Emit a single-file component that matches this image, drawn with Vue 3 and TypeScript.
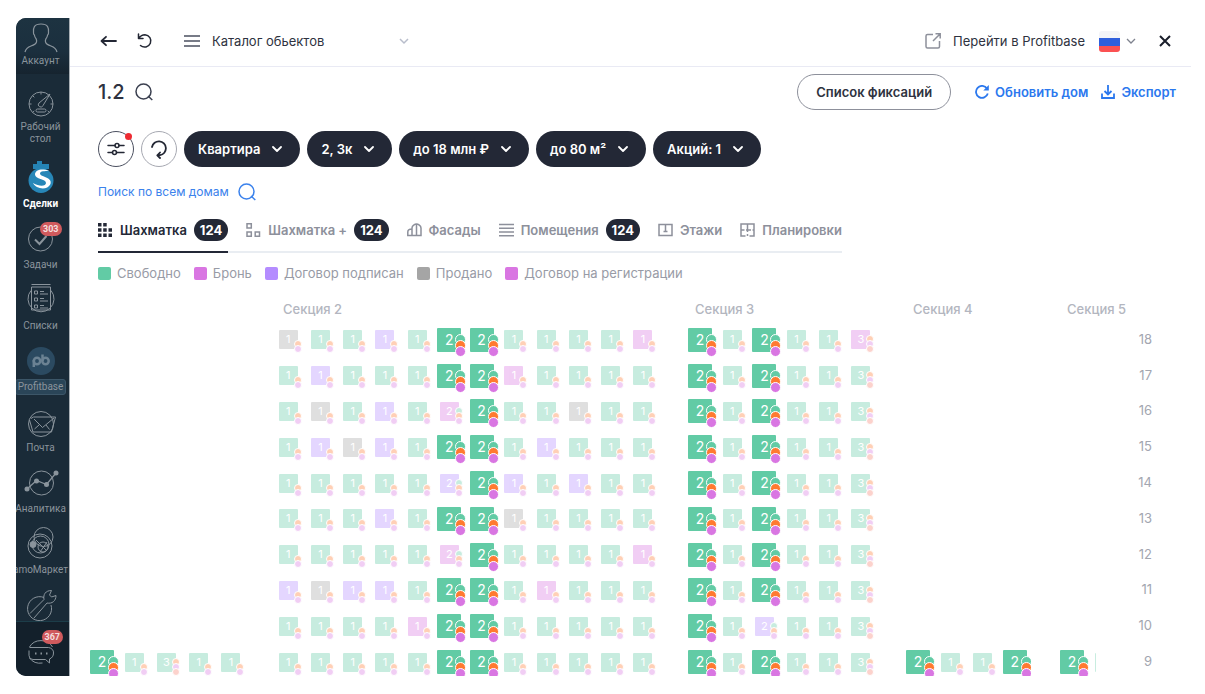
<script setup lang="ts">
interface Tab {
  icon: string
  label: string
  count?: number
}

interface Section {
  name: string
  columns: number
  floors: Record<number, string>
}

interface Cell {
  rooms: string
  status: string
  active: boolean
  dots: string[]
}

const filters = ['Квартира', '2, 3к', 'до 18 млн ₽', 'до 80 м²', 'Акций: 1']

const tabs: Tab[] = [
  { icon: 'chess', label: 'Шахматка', count: 124 },
  { icon: 'chessPlus', label: 'Шахматка +', count: 124 },
  { icon: 'facade', label: 'Фасады' },
  { icon: 'rows', label: 'Помещения', count: 124 },
  { icon: 'floor', label: 'Этажи' },
  { icon: 'plan', label: 'Планировки' },
]

const legend = [
  { status: 'free', label: 'Свободно' },
  { status: 'booked', label: 'Бронь' },
  { status: 'signed', label: 'Договор подписан' },
  { status: 'sold', label: 'Продано' },
  { status: 'booked', label: 'Договор на регистрации' },
]

const floorNumbers = [18, 17, 16, 15, 14, 13, 12, 11, 10, 9]

// One token per flat: status letter + room count; "A2" is a flat that passes the filters.
const sections: Section[] = [
  { name: '', columns: 5, floors: { 9: 'A2 f1 f3 f1 f1' } },
  {
    name: 'Секция 2',
    columns: 12,
    floors: {
      18: 'x1 f1 f1 s1 f1 A2 A2 f1 f1 f1 f1 b1',
      17: 'f1 s1 f1 f1 f1 A2 A2 b1 f1 f1 f1 f1',
      16: 'f1 x1 f1 s1 f1 b2 A2 f1 f1 x1 f1 f1',
      15: 'f1 s1 x1 s1 f1 A2 A2 f1 s1 f1 f1 f1',
      14: 'f1 f1 f1 f1 f1 s2 A2 s1 f1 s1 f1 f1',
      13: 'f1 f1 f1 s1 f1 A2 A2 x1 f1 f1 f1 f1',
      12: 'f1 f1 f1 f1 f1 b2 A2 f1 f1 f1 f1 b1',
      11: 's1 x1 s1 s1 f1 A2 A2 f1 b1 f1 f1 f1',
      10: 'f1 f1 f1 f1 b1 A2 A2 f1 f1 f1 f1 f1',
      9: 'f1 f1 f1 f1 f1 A2 A2 f1 f1 f1 f1 f1',
    },
  },
  {
    name: 'Секция 3',
    columns: 6,
    floors: {
      18: 'A2 f1 A2 f1 f1 b3',
      17: 'A2 f1 A2 f1 f1 f3',
      16: 'A2 f1 A2 f1 f1 f3',
      15: 'A2 f1 A2 f1 f1 f3',
      14: 'A2 f1 A2 f1 f1 f3',
      13: 'A2 f1 A2 f1 f1 f3',
      12: 'A2 f1 A2 f1 f1 f3',
      11: 'A2 f1 A2 f1 f1 f3',
      10: 'A2 f1 s2 f1 f1 f3',
      9: 'A2 f1 A2 f1 f1 f3',
    },
  },
  { name: 'Секция 4', columns: 4, floors: { 9: 'A2 f1 f1 A2' } },
  { name: 'Секция 5', columns: 4, floors: { 9: 'A2 f1 f1 f1' } },
]

const statusNames: Record<string, string> = { A: 'free', f: 'free', s: 'signed', b: 'booked', x: 'sold' }
const dotSets: Record<string, string[]> = {
  1: ['orange', 'pink'],
  2: ['green', 'orange', 'pink'],
  3: ['orange', 'pink', 'red'],
}

function cellsOf(section: Section, floor: number): Cell[] {
  const row = section.floors[floor]
  if (!row) return []
  return row.split(' ').map((token) => ({
    rooms: token[1],
    status: statusNames[token[0]],
    active: token[0] === 'A',
    dots: dotSets[token[1]],
  }))
}

function sectionWidth(section: Section): string {
  return `${Math.floor(section.columns * 32.3)}px`
}
</script>

<template>
  <div class="app">
    <aside class="sidebar">
      <a class="account" href="#">
        <svg class="account-icon" viewBox="0 0 36 30" fill="none" stroke="currentColor" stroke-width="1.200">
          <path d="M2 29c1-4 3-5 6-6 3-1 5-2 5.500-4 .3-1 .1-2-.3-3-1-1-1.600-2.500-1.800-4-.8-.5-1-1.500-.9-2.500C10 5 11 1 18 1s8 4 7.500 8.500c.1 1-.1 2-.9 2.500-.2 1.500-.8 3-1.800 4-.4 1-.6 2-.3 3 .5 2 2.500 3 5.500 4 3 1 5 2 6 6" />
        </svg>
        <span>Аккаунт</span>
      </a>
      <nav class="nav">
        <a class="item" href="#">
          <svg viewBox="0 0 40 34" fill="none" stroke="currentColor">
            <circle cx="20" cy="21" r="12" />
            <path d="M29 11 22 22.500a2.400 2.400 0 1 1-4-2.500zM16.500 26h7a1.500 1.500 0 0 1 0 3h-7a1.500 1.500 0 0 1 0-3zM20 9v2.500M11.500 12.500l1.800 1.800M8 21h2.500M32 21h-2.500M11.500 29.500l1.800-1.600M28.500 29.500l-1.800-1.600" />
          </svg>
          <span>Рабочий<br />стол</span>
        </a>
        <a class="item current" href="#">
          <svg viewBox="0 0 40 34">
            <path d="M16 1h5v3h7v5H12V4h4z" fill="#2584b5" />
            <circle cx="20" cy="20.500" r="12.500" fill="#2787b8" />
            <path d="M28 11c-7-3-14-1-14 3.500 0 5 11 4 11 8.500 0 3-6 4-13 0 3 6 14 8 17.500 1 2.500-7-10.500-7-10.500-10.500 0-2.500 5-2.500 9-2.500z" fill="#fff" />
          </svg>
          <span>Сделки</span>
        </a>
        <a class="item" href="#">
          <svg viewBox="0 0 40 34" fill="none" stroke="currentColor">
            <circle cx="19.500" cy="18" r="12" />
            <path d="m14 18.500 4.500 4.500 7-8" stroke-width="2" />
          </svg>
          <b class="badge">303</b>
          <span>Задачи</span>
        </a>
        <a class="item" href="#">
          <svg viewBox="0 0 40 34" fill="none" stroke="currentColor">
            <path d="M10 8.500a13 13 0 1 0 20 0M10.500 2.500h19M10.500 5h19v23h-19z" />
            <path d="M13.500 9h3v3h-3zM13.500 16h3v3h-3zM13.500 23h3v3h-3zM19 9.500h4M19 12h8M19 16.500h4M19 19h8M19 23.500h4M19 26h8" />
          </svg>
          <span>Списки</span>
        </a>
        <a class="item" href="#">
          <svg viewBox="0 0 40 34">
            <circle cx="20" cy="18" r="14" fill="#2b4a61" />
            <g fill="none" stroke="#6b8293" stroke-width="2.500">
              <circle cx="16" cy="18" r="3.200" />
              <path d="M12.800 17v7M21.500 11.500V18" />
              <circle cx="24.500" cy="18" r="3.200" />
            </g>
          </svg>
          <span class="boxed">Profitbase</span>
        </a>
        <a class="item" href="#">
          <svg viewBox="0 0 40 34" fill="none" stroke="currentColor">
            <circle cx="20" cy="20" r="12.500" />
            <path d="M10 14.500 12.500 13h22l-4 15H12L8.500 16M13 15l8.500 8.500L33 14M13.500 25l4.500-4M28.500 25.500 25 21" />
          </svg>
          <span>Почта</span>
        </a>
        <a class="item" href="#">
          <svg viewBox="0 0 40 34" fill="none" stroke="currentColor">
            <circle cx="20.500" cy="18" r="12" />
            <path d="m6 24 9.500-8.500 10 4L35 8" stroke-width="1.300" />
            <g fill="currentColor" stroke="none">
              <circle cx="6" cy="24" r="2.500" /><circle cx="15.500" cy="16" r="2.500" />
              <circle cx="25.500" cy="19.500" r="2.500" /><circle cx="35" cy="8" r="2.500" />
            </g>
          </svg>
          <span>Аналитика</span>
        </a>
        <a class="item" href="#">
          <svg viewBox="0 0 40 34" fill="none" stroke="currentColor">
            <circle cx="19" cy="20" r="12" /><circle cx="22.500" cy="11" r="9.500" />
            <circle cx="19.500" cy="18.500" r="8.500" /><circle cx="22" cy="21" r="5" />
            <path d="m15 14 11 11M26 16l-7 10" />
            <circle cx="12" cy="18.500" r="3" fill="currentColor" />
          </svg>
          <span>amoМаркет</span>
        </a>
        <a class="item" href="#" aria-label="Настройки">
          <svg viewBox="0 0 40 34" fill="none" stroke="currentColor">
            <path d="M23 10.500A12 12 0 1 0 30 18M9 26.500 23 12.500c-1-5 1.500-9 7.500-9l-2 4.500 2 2 4.500-1.500c0 5.500-4 8.500-9 7.500L13 31" />
          </svg>
        </a>
      </nav>
      <a class="chat" href="#" aria-label="Чаты">
        <svg viewBox="0 0 40 34" fill="none" stroke="currentColor">
          <path d="M8.500 13a13 12 0 0 1 23 0M8.500 24a13 12 0 0 0 13 5M8.500 13.500h19a6 5 0 0 1 5 5.500c0 3-1.500 5-4 6v4l-4-3.500H12a4 4 0 0 1-4-4v-5" />
          <path d="M14 19.500h1.500M19.500 19.500H21M25 19.500h1.500" stroke-width="2" />
        </svg>
        <b class="badge">367</b>
      </a>
    </aside>

    <main class="main">
      <header class="topbar">
        <button class="icon-button back" aria-label="Назад">
          <svg width="18" height="16" viewBox="0 0 18 16" fill="none" stroke="#232734" stroke-width="1.800" stroke-linecap="round" stroke-linejoin="round"><path d="M1.500 8h14.500M6 3.800 1.500 8 6 12.200" /></svg>
        </button>
        <button class="icon-button undo" aria-label="Обновить">
          <svg width="16" height="16" viewBox="0 0 16 16" fill="none" stroke="#232734" stroke-width="1.500" stroke-linecap="round" stroke-linejoin="round"><path d="M1.500 1v4.500H6M1.800 5.200C3.300 3 5.500 1.700 8 1.700a6.200 6.200 0 1 1-4.500 10.800" /></svg>
        </button>
        <button class="catalog">
          <svg width="16" height="14" viewBox="0 0 16 14" fill="none" stroke="#4b5060" stroke-width="1.500"><path d="M0 2h16M0 7h16M0 12h16" /></svg>
          <span>Каталог обьектов</span>
          <svg class="catalog-arrow" width="10" height="8" viewBox="0 0 10 8" fill="none" stroke="#b8bdcb" stroke-width="1.500"><path d="m1 2 4 4 4-4" /></svg>
        </button>
        <a class="external" href="#">
          <svg width="16" height="16" viewBox="0 0 16 16" fill="none" stroke="#8d909b" stroke-width="1.500"><path d="M8 1.500H2.500a1.500 1.500 0 0 0-1.500 1.500v10.500A1.500 1.500 0 0 0 2.500 15H13a1.500 1.500 0 0 0 1.500-1.500V8M10.500.800h4.700v4.700M15 1 8 8" /></svg>
          <span>Перейти в Profitbase</span>
        </a>
        <button class="language" aria-label="Русский">
          <span class="flag"></span>
          <svg width="10" height="8" viewBox="0 0 10 8" fill="none" stroke="#7e828e" stroke-width="1.300"><path d="m1 2 4 4 4-4" /></svg>
        </button>
        <button class="icon-button" aria-label="Закрыть">
          <svg width="12" height="12" viewBox="0 0 12 12" fill="none" stroke="#1a1e2b" stroke-width="2"><path d="m1 1 10 10M11 1 1 11" /></svg>
        </button>
      </header>

      <div class="titlebar">
        <h1>1.2</h1>
        <button class="icon-button title-search" aria-label="Поиск">
          <svg width="18" height="18" viewBox="0 0 18 18" fill="none" stroke="#3b4050" stroke-width="1.500"><circle cx="8.500" cy="8.500" r="7.500" /><path d="m13 13 4.300 4" /></svg>
        </button>
        <button class="fixations">Список фиксаций</button>
        <a class="action" href="#">
          <svg width="14" height="14" viewBox="0 0 14 14" fill="none" stroke="currentColor" stroke-width="1.800"><path d="M12 3.500A6 6 0 1 0 12.800 8.500" /><path d="M13.800 0v5.500H8.300z" fill="currentColor" stroke="none" /></svg>
          Обновить дом
        </a>
        <a class="action" href="#">
          <svg width="14" height="14" viewBox="0 0 14 14" fill="none" stroke="currentColor" stroke-width="1.800"><path d="M7 0v9M3.500 6 7 9.500 10.500 6M1 8.500V13h12V8.500" /></svg>
          Экспорт
        </a>
      </div>

      <div class="filters">
        <button class="round marked" aria-label="Фильтры">
          <svg width="18" height="14" viewBox="0 0 18 14" fill="none" stroke="#232734" stroke-width="1.500" stroke-linecap="round"><path d="M1 3.500h7M12 3.500h5M1 10.500h4.500M9.500 10.500H17" /><circle cx="10" cy="3.500" r="2" /><circle cx="7.500" cy="10.500" r="2" /></svg>
        </button>
        <button class="round" aria-label="Сбросить">
          <svg width="18" height="20" viewBox="0 0 18 20" fill="none" stroke="#232734" stroke-width="1.800" stroke-linecap="round" stroke-linejoin="round"><path d="M2 8a7 7 0 1 1 8 8.200H7.500M10 13.500 7.300 16.300 10 19" /></svg>
        </button>
        <button v-for="filter in filters" :key="filter" class="pill">
          <span>{{ filter }}</span>
          <svg width="10" height="8" viewBox="0 0 10 8" fill="none" stroke="#fff" stroke-width="1.800" stroke-linecap="round" stroke-linejoin="round"><path d="m1 2 4 4 4-4" /></svg>
        </button>
      </div>

      <a class="search-all" href="#">
        <span>Поиск по всем домам</span>
        <svg width="18" height="18" viewBox="0 0 18 18" fill="none" stroke="currentColor" stroke-width="1.500"><circle cx="8.500" cy="8.500" r="7.500" /><path d="m13 13 4.300 4" /></svg>
      </a>

      <nav class="tabs">
        <a v-for="(tab, index) in tabs" :key="tab.label" class="tab" :class="{ selected: index === 0 }" href="#">
          <svg width="15" height="14" viewBox="0 0 15 14" fill="none" stroke="currentColor" stroke-width="1.500">
            <path v-if="tab.icon === 'chess'" d="M0 0h3.500v3.500H0zM5.200 0h3.500v3.500H5.200zM0 5.200h3.500v3.500H0zM5.200 5.200h3.500v3.500H5.200zM10.500 5.200H14v3.500h-3.500zM0 10.500h3.500V14H0zM5.200 10.500h3.500V14H5.200zM10.500 10.500H14V14h-3.500z" fill="currentColor" stroke="none" />
            <path v-else-if="tab.icon === 'chessPlus'" d="M1 .8h4.300v4.300H1zM1 8.900h4.300v4.300H1zM9.200 8.900h4.300v4.300H9.200z" />
            <path v-else-if="tab.icon === 'facade'" d="M5 12.500H.8V9c0-2 2-3 4.200-3M5 12.500V5c0-2.500 3-4 4.500-4S14 2.500 14 5v7.500zM9.500 1v11.500" />
            <path v-else-if="tab.icon === 'rows'" d="M0 1.500h15M0 5.200h15M0 9h15M0 12.700h15" />
            <path v-else-if="tab.icon === 'floor'" d="M4.500 12.500H1v-11h13v11H4.500M5 1.500h5M7.500 1.500v7M5.500 8.500h4" />
            <path v-else d="M1 9V1h13v12H9.500M1 9v4h4.500M7.500 1v5.500M7.500 11v2M1 7h3.500M6 7h5M12.500 7H14M7.500 7v2" />
          </svg>
          <span>{{ tab.label }}</span>
          <b v-if="tab.count" class="count">{{ tab.count }}</b>
        </a>
      </nav>

      <ul class="legend">
        <li v-for="entry in legend" :key="entry.label"><i class="swatch" :class="entry.status"></i>{{ entry.label }}</li>
      </ul>

      <div class="board">
        <div class="sections">
          <section v-for="section in sections" :key="section.name" class="section">
            <h2>{{ section.name }}</h2>
            <div class="floors">
              <div v-for="floor in floorNumbers" :key="floor" class="floor" :style="{ width: sectionWidth(section) }">
                <button v-for="(cell, index) in cellsOf(section, floor)" :key="index" class="cell" :class="[cell.status, { active: cell.active }]">
                  <span>{{ cell.rooms }}</span>
                  <span class="dots"><i v-for="dot in cell.dots" :key="dot" :class="dot"></i></span>
                </button>
              </div>
            </div>
          </section>
        </div>
        <div class="floors numbers">
          <span v-for="floor in floorNumbers" :key="floor">{{ floor }}</span>
        </div>
      </div>
    </main>
  </div>
</template>

<style>
html,
body,
#app {
  height: 100%;
  margin: 0;
}
</style>

<style scoped>
.app {
  box-sizing: border-box;
  display: flex;
  height: 100vh;
  padding: 18px 14px 18px 16px;
  background: #fff;
  color: #2e3240;
  font: 13px/18px Inter, "Open Sans", sans-serif;
  overflow: hidden;
}

a {
  color: inherit;
  text-decoration: none;
}

button {
  padding: 0;
  border: 0;
  background: none;
  color: inherit;
  font: inherit;
  cursor: pointer;
}

svg {
  flex: none;
}

.sidebar {
  flex: none;
  display: flex;
  flex-direction: column;
  width: 53px;
  background: #1a2b38;
  border-right: 1px solid #a9b0b6;
  border-radius: 10px 0 0 10px;
  color: #8a949c;
  font: 10px/12px Roboto, "Noto Sans", sans-serif;
  text-align: center;
  overflow: hidden;
}

.account {
  flex: none;
  display: flex;
  flex-direction: column;
  align-items: center;
  box-sizing: border-box;
  height: 56px;
  padding: 5px 4px 0 0;
  background: linear-gradient(#1d3341, #1b2f3e 60%, #16242f);
}

.account-icon {
  width: 36px;
  height: 30px;
  margin-bottom: 2px;
}

.nav {
  flex: 1;
  display: flex;
  flex-direction: column;
  align-items: center;
  min-height: 0;
  padding: 9px 4px 0 0;
  overflow: hidden;
}

.item {
  position: relative;
  flex: none;
  display: flex;
  flex-direction: column;
  align-items: center;
  gap: 4px;
  min-height: 61px;
  white-space: nowrap;
}

.item:first-child {
  min-height: 77px;
}

.item svg,
.chat svg {
  width: 40px;
  height: 34px;
}

.current {
  color: #fff;
  font-weight: 700;
}

.boxed {
  box-sizing: border-box;
  margin-top: -2px;
  padding: 1px 2px;
  border: 1px solid #3c5668;
  border-radius: 3px;
  background: #2a4558;
}

.badge {
  position: absolute;
  top: 1px;
  right: -1px;
  padding: 0 3px;
  border-radius: 7px;
  background: #cf5a5d;
  color: #f3dede;
  font-size: 9px;
  line-height: 14px;
}

.chat {
  position: relative;
  flex: none;
  display: flex;
  justify-content: center;
  box-sizing: border-box;
  height: 55px;
  padding: 12px 3px 0 0;
  border-top: 1px solid #1c3d49;
  background: #13202b;
}

.chat .badge {
  top: 8px;
  right: 6px;
}

.main {
  flex: 1;
  display: flex;
  flex-direction: column;
  min-width: 0;
  overflow: hidden;
}

.topbar {
  flex: none;
  display: flex;
  align-items: center;
  box-sizing: border-box;
  height: 49px;
  padding: 0 20px 2px 30px;
  border-bottom: 1px solid #e9eaf4;
}

.icon-button {
  display: flex;
}

.undo {
  margin: 0 31px 0 19px;
}

.catalog {
  display: flex;
  align-items: center;
  width: 225px;
}

.catalog span {
  margin-left: 12px;
}

.catalog-arrow {
  margin-left: auto;
}

.external {
  display: flex;
  align-items: center;
  gap: 12px;
  margin-left: auto;
}

.language {
  display: flex;
  align-items: center;
  gap: 6px;
  margin: 0 23px 0 14px;
}

.flag {
  width: 21px;
  height: 21px;
  border-radius: 3px;
  background: linear-gradient(#f3f4f8 0 7px, #2f5fdc 7px 15px, #fb5152 15px);
}

.titlebar {
  flex: none;
  display: flex;
  align-items: center;
  height: 50px;
  padding: 0 15px 0 28px;
}

h1 {
  margin: 0;
  font-size: 20px;
  line-height: 24px;
  font-weight: 500;
}

.title-search {
  margin-left: 10px;
}

.fixations {
  height: 36px;
  margin-left: auto;
  padding: 0 18px;
  border: 1px solid #8d909b;
  border-radius: 18px;
  font-weight: 600;
}

.action {
  display: flex;
  align-items: center;
  gap: 6px;
  margin-left: 13px;
  color: #2b78ee;
  font-weight: 600;
}

.fixations + .action {
  margin-left: 24px;
}

.filters {
  flex: none;
  display: flex;
  gap: 7px;
  margin: 14px 0 0 28px;
}

.round {
  position: relative;
  display: flex;
  align-items: center;
  justify-content: center;
  width: 36px;
  height: 36px;
  border: 1px solid #a6a8b1;
  border-radius: 50%;
}

.marked {
  border-color: #4b5060;
}

.marked::after {
  content: "";
  position: absolute;
  top: 1px;
  right: 1px;
  width: 7px;
  height: 7px;
  border-radius: 50%;
  background: #ee2b32;
}

.pill {
  display: flex;
  align-items: center;
  gap: 12px;
  height: 36px;
  padding: 0 18px 0 14px;
  border-radius: 18px;
  background: #232836;
  color: #fff;
  font-weight: 600;
}

.search-all {
  flex: none;
  display: flex;
  align-items: center;
  gap: 9px;
  align-self: flex-start;
  margin: 16px 0 0 28px;
  color: #3b82ec;
  font-size: 12px;
}

.tabs {
  flex: none;
  display: flex;
  align-self: flex-start;
  gap: 18px;
  margin: 13px 0 0 28px;
  box-shadow: inset 0 -2px #e9edf2;
}

.tab {
  display: flex;
  align-items: center;
  gap: 7px;
  height: 32px;
  padding-bottom: 7px;
  color: #8d909b;
  font-weight: 600;
}

.selected {
  box-shadow: inset 0 -2px #232836;
  color: #232836;
}

.count {
  padding: 0 6px;
  border-radius: 11px;
  background: #232836;
  color: #fff;
  line-height: 22px;
  font-weight: 700;
}

.legend {
  flex: none;
  display: flex;
  gap: 13px;
  margin: 11px 0 0 28px;
  padding: 0;
  color: #989ba6;
  list-style: none;
}

.legend li {
  display: flex;
  align-items: center;
  gap: 6px;
}

.swatch {
  width: 13px;
  height: 13px;
  border-radius: 2px;
}

.free {
  background: #62cba5;
}

.booked {
  background: #d976e2;
}

.signed {
  background: #b48cff;
}

.sold {
  background: #a5a5a5;
}

.board {
  flex: 1;
  display: flex;
  min-height: 0;
  margin-top: 18px;
  overflow: hidden;
}

.sections {
  flex: 1;
  display: flex;
  gap: 25px;
  min-width: 0;
  padding-left: 16px;
}

.section {
  flex: none;
}

.section:last-child {
  flex: 0 1 auto;
  min-width: 0;
}

h2 {
  height: 18px;
  margin: 0 0 4px 11px;
  color: #b3b6c0;
  font-size: 13px;
  line-height: 18px;
  font-weight: 500;
  white-space: nowrap;
}

.floors {
  display: grid;
  grid-template-rows: repeat(10, 1fr);
  height: 358px;
  overflow: hidden;
}

.floor {
  display: grid;
  grid-auto-columns: 1fr;
  grid-auto-flow: column;
  align-items: center;
  justify-items: center;
}

.cell {
  position: relative;
  width: 19px;
  height: 19px;
  border-radius: 1px;
  color: #fff;
  font-size: 11px;
  line-height: 17px;
  opacity: 0.35;
}

.cell.active {
  width: 24px;
  height: 24px;
  font-size: 14px;
  line-height: 20px;
  opacity: 1;
}

.dots {
  position: absolute;
  right: -4px;
  bottom: -4px;
  display: flex;
  flex-direction: column;
}

.dots i {
  box-sizing: border-box;
  width: 8px;
  height: 8px;
  border: 1px solid #fff;
  border-radius: 50%;
}

.dots i + i {
  margin-top: -3px;
}

.active .dots {
  right: -5px;
  bottom: -5px;
}

.active .dots i {
  width: 11px;
  height: 11px;
}

.active .dots i + i {
  margin-top: -5px;
}

.green {
  background: #62cba5;
}

.orange {
  background: #ff7a30;
}

.pink {
  background: #d976e2;
}

.red {
  background: #f97f70;
}

.numbers {
  flex: none;
  align-items: center;
  width: 56px;
  margin-top: 21px;
  padding-right: 39px;
  color: #a3a6b0;
  text-align: right;
}
</style>
